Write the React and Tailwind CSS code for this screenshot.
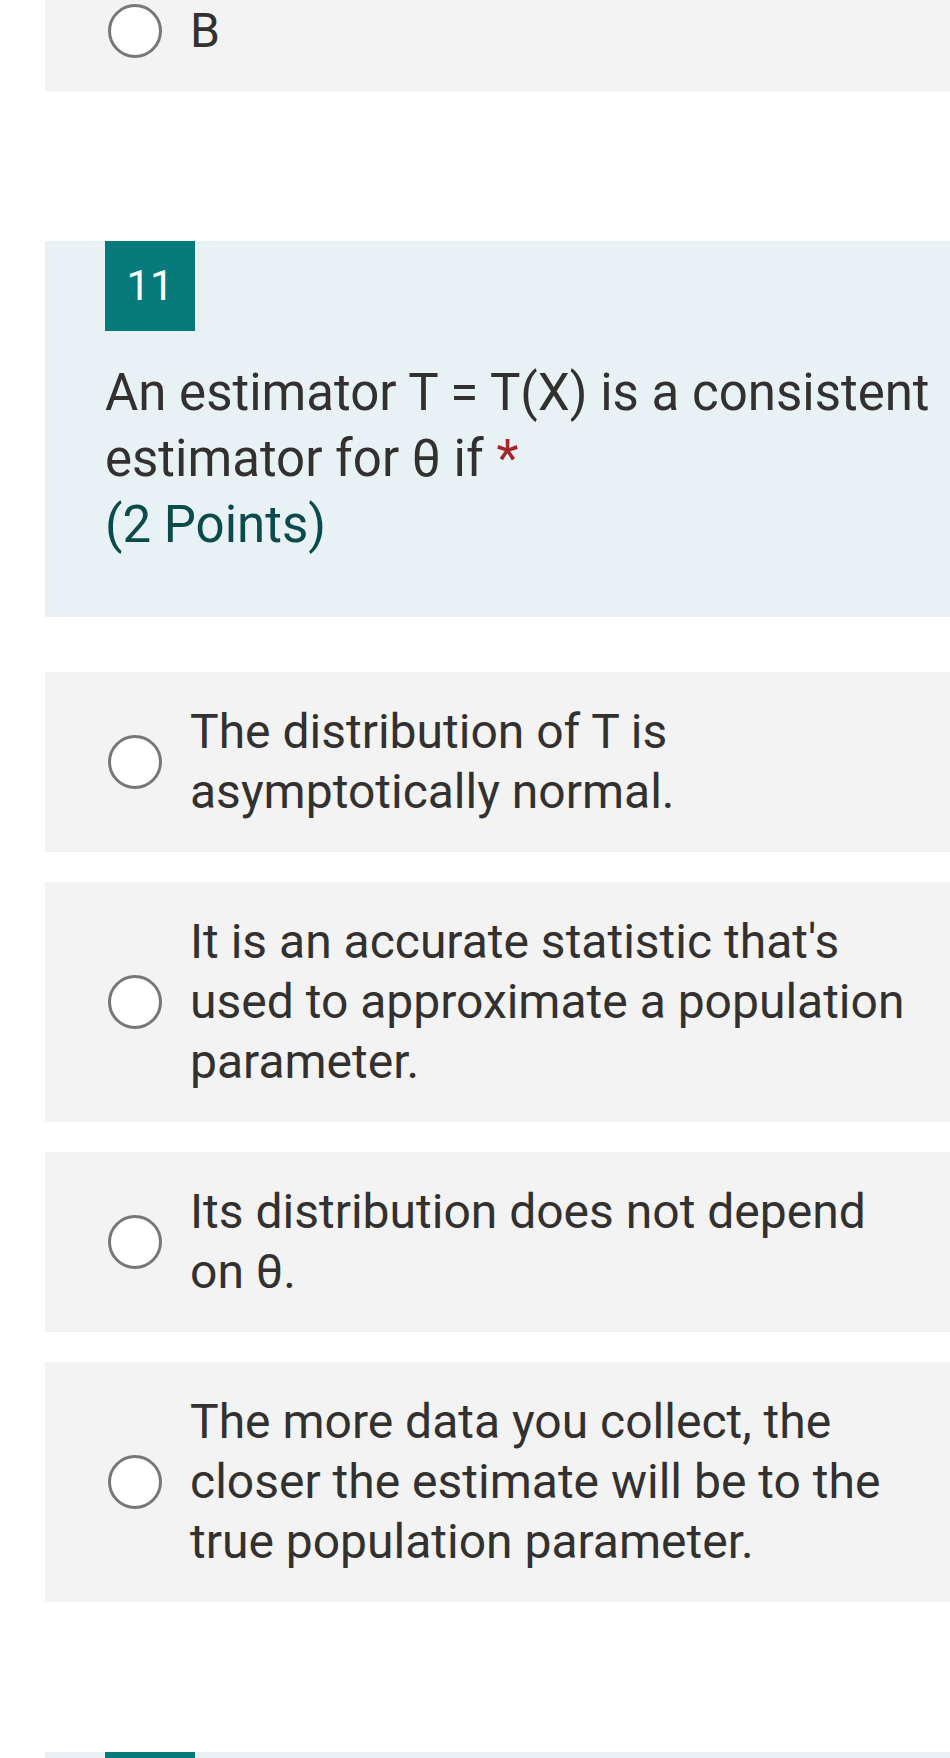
import React from "react";

function Radio() {
  return (
    <div className="w-[54px] h-[54px] shrink-0 rounded-full border-[3px] border-[#777777] bg-white" />
  );
}

function Option({ lines }) {
  return (
    <div className="flex items-center bg-[#f3f3f3] py-[30px] pl-[63px]">
      <Radio />
      <div className="ml-[28px] text-[48px] leading-[60px] text-[#323130] whitespace-nowrap">
        {lines.map((l, i) => (
          <div key={i}>{l}</div>
        ))}
      </div>
    </div>
  );
}

export default function App() {
  return (
    <div
      className="w-[950px] h-[1758px] overflow-hidden bg-white"
      style={{ fontFamily: "Roboto, 'Noto Sans', sans-serif" }}
    >
      <div className="pl-[45px]">
        <div className="mt-[-29px]">
          <Option lines={["B"]} />
        </div>

        <div className="mt-[150px] bg-[#e8f1f4] pl-[60px] pb-[59px]">
          <div className="w-[90px] h-[90px] bg-[#077a7b] flex items-center justify-center text-white text-[42px] leading-none">
            11
          </div>
          <div className="mt-[29px] text-[51px] leading-[66px] text-[#323130] whitespace-nowrap">
            <div>An estimator T = T(X) is a consistent</div>
            <div>
              estimator for θ if <span className="text-[#a4262c]">*</span>
            </div>
            <div className="text-[#0b4b4b]">(2 Points)</div>
          </div>
        </div>

        <div className="mt-[55px] flex flex-col gap-[30px]">
          <Option lines={["The distribution of T is", "asymptotically normal."]} />
          <Option
            lines={[
              "It is an accurate statistic that's",
              "used to approximate a population",
              "parameter.",
            ]}
          />
          <Option lines={["Its distribution does not depend", "on θ."]} />
          <Option
            lines={[
              "The more data you collect, the",
              "closer the estimate will be to the",
              "true population parameter.",
            ]}
          />
        </div>

        <div className="mt-[150px] bg-[#e8f1f4] pl-[60px] h-[90px]">
          <div className="w-[90px] h-[90px] bg-[#077a7b]" />
        </div>
      </div>
    </div>
  );
}
